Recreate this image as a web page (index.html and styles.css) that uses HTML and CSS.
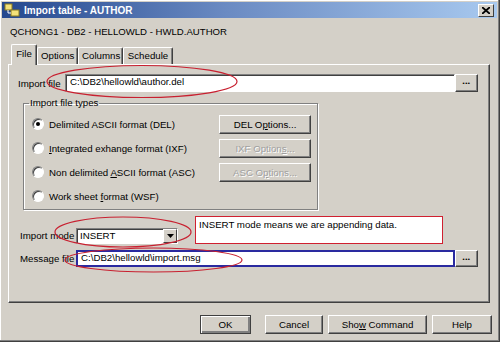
FILE: index.html
```html
<!DOCTYPE html>
<html lang="en">
<head>
    <meta charset="UTF-8">
    <title>Import table - AUTHOR</title>
    <link rel="stylesheet" href="styles.css">
</head>
<body>
    <div class="window">
        <div class="titlebar">
            <svg class="app-icon" width="16" height="14" viewBox="0 0 16 14">
                <rect x="1" y="1" width="7" height="6" fill="#f4e27a" stroke="#8a7a20" stroke-width="1"/>
                <rect x="7" y="7" width="8" height="6" fill="#f4e27a" stroke="#8a7a20" stroke-width="1"/>
                <path d="M4 7 V10 H7" fill="none" stroke="#fff" stroke-width="1"/>
            </svg>
            <span class="title">Import table - AUTHOR</span>
            <span class="close-btn">
                <svg width="8" height="7" viewBox="0 0 8 7"><path d="M0 0 L8 7 M8 0 L0 7" stroke="#000" stroke-width="1.8"/></svg>
            </span>
        </div>

        <div class="subtitle">QCHONG1 - DB2 - HELLOWLD - HWLD.AUTHOR</div>

        <div class="tabs">
            <div class="tab active">File</div>
            <div class="tab">Options</div>
            <div class="tab">Columns</div>
            <div class="tab">Schedule</div>
        </div>

        <div class="panel">
            <div class="field-row file-row">
                <span class="lbl lbl-file">Import file</span>
                <div class="textbox file-box">C:\DB2\hellowld\author.del</div>
                <span class="btn browse">•••</span>
            </div>

            <fieldset class="group">
                <legend>Import file types</legend>
                <div class="type-row">
                    <span class="radio checked"></span>
                    <span class="type-text">Delimited ASCII format (DEL)</span>
                    <span class="btn opt"><span>DEL O<u>p</u>tions...</span></span>
                </div>
                <div class="type-row">
                    <span class="radio"></span>
                    <span class="type-text"><u>I</u>ntegrated exhange format (IXF)</span>
                    <span class="btn opt disabled"><span>IXF Option<u>s</u>...</span></span>
                </div>
                <div class="type-row">
                    <span class="radio"></span>
                    <span class="type-text">Non delimited <u>A</u>SCII format (ASC)</span>
                    <span class="btn opt disabled"><span>ASC O<u>p</u>tions...</span></span>
                </div>
                <div class="type-row">
                    <span class="radio"></span>
                    <span class="type-text">Work sheet <u>f</u>ormat (WSF)</span>
                </div>
            </fieldset>

            <div class="mode-row">
                <span class="lbl lbl-mode">Import mode</span>
                <div class="select">
                    <span class="select-value">INSERT</span>
                    <span class="select-arrow">
                        <svg width="7" height="4" viewBox="0 0 7 4"><path d="M0 0 H7 L3.5 4 Z" fill="#000"/></svg>
                    </span>
                </div>
                <div class="note">INSERT mode means we are appending data.</div>
            </div>

            <div class="field-row msg-row">
                <span class="lbl lbl-mode">Message file</span>
                <div class="textbox msg-box">C:\DB2\hellowld\import.msg</div>
                <span class="btn browse">•••</span>
            </div>
        </div>

        <div class="footer">
            <span class="btn foot default ok">OK</span>
            <span class="btn foot cancel">Cancel</span>
            <span class="btn foot show"><span>Sho<u>w</u> Command</span></span>
            <span class="btn foot help">Help</span>
        </div>

        <svg class="marks" width="500" height="342" viewBox="0 0 500 342">
            <ellipse cx="142" cy="81.5" rx="95" ry="16" />
            <ellipse cx="123" cy="232" rx="68" ry="15" />
            <ellipse cx="153.5" cy="260" rx="88.5" ry="12" />
        </svg>
    </div>
</body>
</html>
```

FILE: styles.css
```css
body {
    margin: 0;
    padding: 0;
    font-family: "Liberation Sans", Arial, sans-serif;
    font-size: 9.7px;
    color: #000;
    background-color: #d4d0c8;
}
.window {
    position: relative;
    width: 500px;
    height: 342px;
    box-sizing: border-box;
    background-color: #d4d0c8;
    border-right: 1px solid #404040;
    border-bottom: 1px solid #404040;
    box-shadow: inset -1px -1px 0 #808080, inset 1px 1px 0 #fff;
    overflow: hidden;
}
.titlebar {
    display: flex;
    align-items: center;
    height: 16px;
    margin: 2px 2px 0 2px;
    padding: 0 3px 0 2px;
    background: linear-gradient(to right, #24488f, #6a8ac2 45%, #a8c9ef);
}
.app-icon {
    flex: none;
}
.title {
    margin-left: 4px;
    color: #fff;
    font-weight: bold;
    font-size: 10px;
    flex: 1;
}
.close-btn {
    display: flex;
    align-items: center;
    justify-content: center;
    width: 14px;
    height: 11px;
    background-color: #d4d0c8;
    border: 1px solid;
    border-color: #fff #404040 #404040 #fff;
}
.subtitle {
    margin: 7px 0 0 10px;
    line-height: 14px;
    font-size: 9.6px;
}
.tabs {
    display: flex;
    align-items: flex-end;
    height: 20px;
    margin: 5px 0 0 11px;
}
.tab {
    height: 16px;
    line-height: 16px;
    padding: 0 3px;
    text-align: center;
    border: 1px solid;
    border-bottom: none;
    border-color: #fff #404040 #404040 #fff;
    border-radius: 2px 2px 0 0;
    box-shadow: inset -1px 0 0 #808080;
    white-space: nowrap;
}
.tab.active {
    position: relative;
    z-index: 1;
    height: 20px;
    line-height: 18px;
    width: 18px;
    margin-bottom: -1px;
    background-color: #d4d0c8;
}
.tab:nth-child(2) { width: 33px; }
.tab:nth-child(3) { width: 37px; }
.tab:nth-child(4) { width: 42px; }
.panel {
    box-sizing: border-box;
    width: 482px;
    height: 239px;
    margin-left: 8px;
    border: 1px solid;
    border-color: #fff #404040 #404040 #fff;
    box-shadow: inset -1px -1px 0 #808080;
}
.field-row {
    display: flex;
    align-items: center;
}
.file-row {
    height: 18px;
    margin-top: 9px;
    padding-left: 9px;
}
.lbl-file {
    width: 47px;
}
.lbl-mode {
    width: 56px;
    margin-left: 11px;
}
.textbox {
    box-sizing: border-box;
    height: 100%;
    line-height: 14px;
    padding-left: 4px;
    background-color: #fff;
    border: 1px solid;
    border-color: #808080 #fff #fff #808080;
    box-shadow: inset 1px 1px 0 #404040;
    white-space: nowrap;
}
.file-box {
    width: 390px;
}
.btn {
    box-sizing: border-box;
    display: flex;
    align-items: center;
    justify-content: center;
    background-color: #d4d0c8;
    border: 1px solid;
    border-color: #fff #404040 #404040 #fff;
    box-shadow: inset -1px -1px 0 #808080;
    white-space: nowrap;
}
.browse {
    width: 23px;
    height: 100%;
    font-size: 6px;
    letter-spacing: 0.5px;
    font-weight: bold;
}
.group {
    box-sizing: border-box;
    width: 295px;
    margin: 5px 0 0 14px;
    padding: 3px 6px 1px 8px;
    border: 1px solid #808080;
    box-shadow: inset 1px 1px 0 #fff, 1px 1px 0 #fff;
}
.group legend {
    padding: 0 1px;
    margin-left: -3px;
    line-height: 12px;
}
.type-row {
    display: flex;
    align-items: center;
    height: 24px;
}
.radio {
    box-sizing: border-box;
    position: relative;
    width: 12px;
    height: 12px;
    border-radius: 50%;
    background-color: #fff;
    border: 1px solid;
    border-color: #808080 #fff #fff #808080;
    box-shadow: inset 1px 1px 0 #404040;
}
.radio.checked::after {
    content: "";
    position: absolute;
    left: 3px;
    top: 3px;
    width: 4px;
    height: 4px;
    border-radius: 50%;
    background-color: #000;
}
.type-text {
    flex: 1;
    margin-left: 5px;
}
.opt {
    width: 92px;
    height: 19px;
}
.disabled {
    color: #a0a0a0;
    text-shadow: 1px 1px 0 #fff;
}
.mode-row {
    display: flex;
    align-items: flex-end;
    height: 28px;
    margin-top: 6px;
}
.mode-row .lbl {
    line-height: 16px;
}
.select {
    box-sizing: border-box;
    display: flex;
    width: 102px;
    height: 16px;
    background-color: #fff;
    border: 1px solid;
    border-color: #808080 #fff #fff #808080;
    box-shadow: inset 1px 1px 0 #404040;
}
.select-value {
    flex: 1;
    line-height: 14px;
    padding-left: 3px;
}
.select-arrow {
    box-sizing: border-box;
    display: flex;
    align-items: center;
    justify-content: center;
    width: 14px;
    height: 14px;
    background-color: #d4d0c8;
    border: 1px solid;
    border-color: #fff #404040 #404040 #fff;
}
.note {
    box-sizing: border-box;
    align-self: stretch;
    width: 248px;
    margin-left: 17px;
    padding: 2px 0 0 3px;
    background-color: #fff;
    border: 1px solid #d02030;
}
.msg-row {
    height: 17px;
    margin-top: 6px;
}
.msg-box {
    width: 379px;
    line-height: 13px;
    border: 1px solid #2a2aa0;
    box-shadow: inset 0 0 0 1px #2a2aa0;
}
.footer {
    display: flex;
    justify-content: flex-end;
    margin-top: 12px;
    padding-right: 7px;
}
.foot {
    height: 19px;
}
.default {
    border-color: #404040;
    box-shadow: inset 1px 1px 0 #fff, inset -2px -2px 0 #808080;
}
.ok { width: 51px; }
.cancel { width: 58px; margin-left: 14px; }
.show { width: 99px; margin-left: 5px; }
.help { width: 60px; margin-left: 5px; }
.marks {
    position: absolute;
    left: 0;
    top: 0;
    pointer-events: none;
}
.marks ellipse {
    fill: none;
    stroke: #c82030;
    stroke-width: 1.2;
}
```
